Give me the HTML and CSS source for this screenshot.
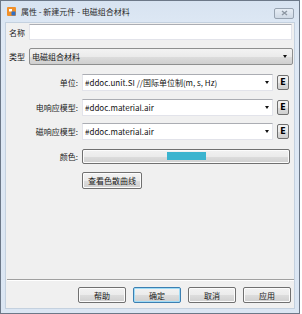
FILE: index.html
```html
<!DOCTYPE html>
<html lang="zh-CN">
<head>
  <meta charset="UTF-8">
  <meta name="viewport" content="width=device-width, initial-scale=1.0">
  <title>属性 - 新建元件 - 电磁组合材料</title>
  <link rel="stylesheet" href="styles.css">
</head>
<body>
  <div class="window">
    <div class="titlebar">
      <svg class="app-icon" width="9" height="9" viewBox="0 0 9 9">
        <rect x="0" y="0" width="9" height="9" rx="1" fill="#f0902a"/>
        <path d="M2 2 L5 2 L5 4.5 L2 4.5 Z" fill="#fff"/>
        <rect x="4.5" y="4.5" width="4" height="4" fill="#2f6fc7"/>
      </svg>
      <span class="title">属性 - 新建元件 - 电磁组合材料</span>
      <span class="close-btn">
        <svg width="7" height="6" viewBox="0 0 7 6">
          <path d="M1 1 L6 5 M6 1 L1 5" stroke="#8d97a3" stroke-width="1.4"/>
        </svg>
      </span>
    </div>

    <div class="content">
      <div class="row-top">
        <label class="top-label">名称</label>
        <div class="textbox"></div>
      </div>
      <div class="row-top type-row">
        <label class="top-label">类型</label>
        <div class="dropdown">电磁组合材料<span class="arrow"></span></div>
      </div>

      <div class="props">
        <label>单位:</label>
        <div class="field">
          <div class="combo">#ddoc.unit.SI //国际单位制(m, s, Hz)<span class="arrow"></span></div>
          <button class="e-btn">E</button>
        </div>

        <label>电响应模型:</label>
        <div class="field">
          <div class="combo">#ddoc.material.air<span class="arrow"></span></div>
          <button class="e-btn">E</button>
        </div>

        <label>磁响应模型:</label>
        <div class="field">
          <div class="combo">#ddoc.material.air<span class="arrow"></span></div>
          <button class="e-btn">E</button>
        </div>

        <label>颜色:</label>
        <div class="field">
          <button class="btn color-btn"><span class="swatch"></span></button>
        </div>

        <span></span>
        <div class="field">
          <button class="btn curve-btn">查看色散曲线</button>
        </div>
      </div>

      <div class="spacer"></div>
      <div class="separator"></div>

      <div class="actions">
        <button class="btn">帮助</button>
        <button class="btn default">确定</button>
        <button class="btn">取消</button>
        <button class="btn">应用</button>
      </div>
    </div>
  </div>
</body>
</html>
```

FILE: styles.css
```css
body {
  margin: 0;
  background: #fff;
  font-family: "Noto Sans CJK SC", "Noto Sans", sans-serif;
  font-size: 8px;
  color: #1a1a1a;
}

.window {
  width: 300px;
  height: 314px;
  box-sizing: border-box;
  border: 1px solid #6c7888;
  background: linear-gradient(#d7e3f1, #dfe9f5 30px, #dbe6f3);
  padding: 0 4px 4px 4px;
  display: flex;
  flex-direction: column;
}

.titlebar {
  height: 21px;
  display: flex;
  align-items: center;
}

.app-icon {
  margin-left: 2px;
  margin-right: 5px;
}

.title {
  flex: 1;
  color: #2a2a2a;
}

.close-btn {
  width: 20px;
  height: 11px;
  box-sizing: border-box;
  border: 1px solid #97a3b1;
  border-radius: 2px;
  background: linear-gradient(#e6edf5, #cfd9e5);
  display: flex;
  align-items: center;
  justify-content: center;
  margin-right: 1px;
  margin-top: 3px;
}

.content {
  flex: 1;
  background: #f0f0f0;
  border: 1px solid #c4d1df;
  display: flex;
  flex-direction: column;
  padding: 1px 1px 5px 3px;
}

.row-top {
  display: flex;
  align-items: center;
}

.top-label {
  width: 20px;
  flex-shrink: 0;
}

.textbox {
  flex: 1;
  height: 16px;
  box-sizing: border-box;
  background: #fff;
  border: 1px solid #e2e3ea;
  border-top-color: #abadb3;
  margin-right: 1px;
}

.type-row {
  margin-top: 8px;
}

.dropdown {
  flex: 1;
  height: 17px;
  box-sizing: border-box;
  border: 1px solid #8e8f8f;
  border-radius: 2px;
  background: linear-gradient(#f3f3f3 0%, #ebebeb 50%, #dddddd 51%, #cfcfcf 100%);
  display: flex;
  align-items: center;
  padding: 0 5px 0 2px;
}

.arrow {
  margin-left: auto;
  width: 0;
  height: 0;
  border-left: 2.5px solid transparent;
  border-right: 2.5px solid transparent;
  border-top: 3px solid #111;
}

.props {
  margin-top: 9px;
  margin-right: 3px;
  display: grid;
  grid-template-columns: 69px 1fr;
  column-gap: 4px;
  grid-auto-rows: 17px;
  row-gap: 7.5px;
}

.props label {
  display: flex;
  align-items: center;
  justify-content: flex-end;
}

.field {
  display: flex;
  align-items: center;
  gap: 4px;
}

.combo {
  flex: 1;
  height: 17px;
  box-sizing: border-box;
  background: #fff;
  border: 1px solid #e2e3ea;
  border-top-color: #abadb3;
  display: flex;
  align-items: center;
  padding: 0 3px 0 2px;
  color: #111;
}

.btn {
  font-family: inherit;
  font-size: 8px;
  color: #1a1a1a;
  border: 1px solid #707070;
  border-radius: 2px;
  background: linear-gradient(#f2f2f2 0%, #ebebeb 50%, #dddddd 51%, #cfcfcf 100%);
  box-shadow: inset 0 0 0 1px #fcfcfc;
  padding: 0;
  height: 16px;
  box-sizing: border-box;
}

.e-btn {
  width: 12px;
  height: 15px;
  padding: 0;
  box-sizing: border-box;
  font-family: "DejaVu Sans", sans-serif;
  font-weight: bold;
  font-size: 8px;
  border: 1px solid #707070;
  border-radius: 2px;
  background: linear-gradient(#f2f2f2 0%, #ebebeb 50%, #dddddd 51%, #cfcfcf 100%);
  margin-right: 1px;
}

.color-btn {
  flex: 1;
  height: 15px;
  display: flex;
  align-items: center;
  justify-content: center;
}

.swatch {
  width: 39px;
  height: 8px;
  background: #3bb4cf;
  margin-left: 1px;
}

.curve-btn {
  width: 60px;
  height: 17px;
}

.spacer {
  flex: 1;
}

.separator {
  height: 1px;
  background: #a0a0a0;
  border-bottom: 1px solid #fff;
  margin: 0 -1px 0 -2px;
}

.actions {
  display: flex;
  justify-content: flex-end;
  gap: 7px;
  margin-top: 6px;
  padding-right: 2px;
}

.actions .btn {
  width: 48px;
  height: 16px;
}

.actions .default {
  border-color: #3c7fb1;
  box-shadow: inset 0 0 0 1px #9fdcf7;
}
```
